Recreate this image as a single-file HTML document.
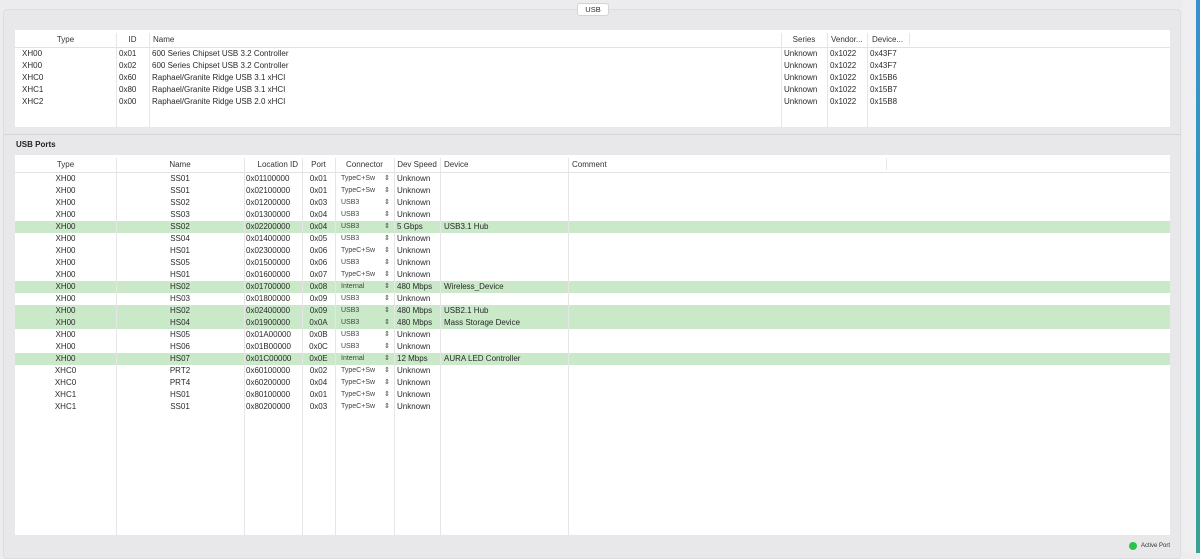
<!DOCTYPE html>
<html><head><meta charset="utf-8"><style>
*{margin:0;padding:0;box-sizing:border-box}
body{width:1200px;height:553px;overflow:hidden;background:#ececee;font-family:"Liberation Sans",sans-serif;font-size:8px;color:#2a2a2a;position:relative}
.abs{position:absolute}
#panel{left:3px;top:9px;width:1178px;height:550px;background:#e8e8ea;border:1px solid #dedee0;border-radius:4px}
#strip{left:1196px;top:0;width:4px;height:553px;background:linear-gradient(#3a8fd0,#2f9fb0 60%,#3aa090)}
.tbl{background:#fff;left:15px;width:1155px}
.vl{position:absolute;width:1px;background:#e6e6e6}
.hl{position:absolute;height:1px;background:#e2e2e2;left:0;right:0}
.row{position:absolute;left:0;width:1155px;height:12px;line-height:12px;white-space:nowrap}
.row span{position:absolute}
.g{background:#c9e9c9}
.c{text-align:center}
.h{color:#333}
.sm{font-size:7px;color:#444}
</style></head><body>
<div class="abs" id="panel"></div>
<div class="abs" style="left:1183px;top:0;width:13px;height:553px;background:#efeff1"></div>
<div class="abs" id="strip"></div>
<div class="abs" style="left:577px;top:3px;width:32px;height:13px;background:#fff;border:1px solid #d4d4d4;border-radius:3px;text-align:center;line-height:11px;font-size:7.5px">USB</div>

<!-- top table -->
<div class="abs tbl" style="top:30px;height:97px">
  <div class="hl" style="top:17px"></div>
  <div class="vl" style="left:101px;top:3px;height:94px"></div>
  <div class="vl" style="left:134px;top:3px;height:94px"></div>
  <div class="vl" style="left:766px;top:3px;height:94px"></div>
  <div class="vl" style="left:812px;top:3px;height:94px"></div>
  <div class="vl" style="left:852px;top:3px;height:94px"></div>
  <div class="vl" style="left:894px;top:3px;height:12px"></div>
  <div class="row h" style="top:4px"><span style="left:0;width:101px" class="c">Type</span><span style="left:101px;width:33px" class="c">ID</span><span style="left:138px">Name</span><span style="left:766px;width:46px" class="c">Series</span><span style="left:816px">Vendor...</span><span style="left:857px">Device...</span></div>
  <div class="row" style="top:18px"><span style="left:7px">XH00</span><span style="left:104px">0x01</span><span style="left:137px">600 Series Chipset USB 3.2 Controller</span><span style="left:769px">Unknown</span><span style="left:815px">0x1022</span><span style="left:855px">0x43F7</span></div>
  <div class="row" style="top:30px"><span style="left:7px">XH00</span><span style="left:104px">0x02</span><span style="left:137px">600 Series Chipset USB 3.2 Controller</span><span style="left:769px">Unknown</span><span style="left:815px">0x1022</span><span style="left:855px">0x43F7</span></div>
  <div class="row" style="top:42px"><span style="left:7px">XHC0</span><span style="left:104px">0x60</span><span style="left:137px">Raphael/Granite Ridge USB 3.1 xHCI</span><span style="left:769px">Unknown</span><span style="left:815px">0x1022</span><span style="left:855px">0x15B6</span></div>
  <div class="row" style="top:54px"><span style="left:7px">XHC1</span><span style="left:104px">0x80</span><span style="left:137px">Raphael/Granite Ridge USB 3.1 xHCI</span><span style="left:769px">Unknown</span><span style="left:815px">0x1022</span><span style="left:855px">0x15B7</span></div>
  <div class="row" style="top:66px"><span style="left:7px">XHC2</span><span style="left:104px">0x00</span><span style="left:137px">Raphael/Granite Ridge USB 2.0 xHCI</span><span style="left:769px">Unknown</span><span style="left:815px">0x1022</span><span style="left:855px">0x15B8</span></div>
</div>
<div class="abs" style="left:4px;top:134px;width:1177px;height:1px;background:#d6d6d8"></div>
<div class="abs" style="left:16px;top:140px;font-weight:bold;font-size:8px;color:#222">USB Ports</div>

<!-- bottom table -->
<div class="abs tbl" style="top:155px;height:380px" id="bt">
  <div class="hl" style="top:17px"></div>
  <div class="row h" style="top:4px"><span style="left:0;width:101px" class="c">Type</span><span style="left:101px;width:128px" class="c">Name</span><span style="left:229px;width:58px;text-align:right;padding-right:4px">Location ID</span><span style="left:287px;width:33px" class="c">Port</span><span style="left:320px;width:59px" class="c">Connector</span><span style="left:379px;width:46px" class="c">Dev Speed</span><span style="left:429px">Device</span><span style="left:557px">Comment</span></div>
  <div class="vl" style="left:871px;top:3px;height:12px"></div>
</div>
<script>
var d=[
["XH00","SS01","0x01100000","0x01","TypeC+Sw","Unknown","",0],
["XH00","SS01","0x02100000","0x01","TypeC+Sw","Unknown","",0],
["XH00","SS02","0x01200000","0x03","USB3","Unknown","",0],
["XH00","SS03","0x01300000","0x04","USB3","Unknown","",0],
["XH00","SS02","0x02200000","0x04","USB3","5 Gbps","USB3.1 Hub",1],
["XH00","SS04","0x01400000","0x05","USB3","Unknown","",0],
["XH00","HS01","0x02300000","0x06","TypeC+Sw","Unknown","",0],
["XH00","SS05","0x01500000","0x06","USB3","Unknown","",0],
["XH00","HS01","0x01600000","0x07","TypeC+Sw","Unknown","",0],
["XH00","HS02","0x01700000","0x08","Internal","480 Mbps","Wireless_Device",1],
["XH00","HS03","0x01800000","0x09","USB3","Unknown","",0],
["XH00","HS02","0x02400000","0x09","USB3","480 Mbps","USB2.1 Hub",1],
["XH00","HS04","0x01900000","0x0A","USB3","480 Mbps","Mass Storage Device",1],
["XH00","HS05","0x01A00000","0x0B","USB3","Unknown","",0],
["XH00","HS06","0x01B00000","0x0C","USB3","Unknown","",0],
["XH00","HS07","0x01C00000","0x0E","Internal","12 Mbps","AURA LED Controller",1],
["XHC0","PRT2","0x60100000","0x02","TypeC+Sw","Unknown","",0],
["XHC0","PRT4","0x60200000","0x04","TypeC+Sw","Unknown","",0],
["XHC1","HS01","0x80100000","0x01","TypeC+Sw","Unknown","",0],
["XHC1","SS01","0x80200000","0x03","TypeC+Sw","Unknown","",0]];
var h="";
d.forEach(function(r,i){var t=17+i*12;
h+='<div class="row'+(r[7]?' g':'')+'" style="top:'+(t+1)+'px"><span style="left:0;width:101px" class="c">'+r[0]+'</span><span style="left:101px;width:128px" class="c">'+r[1]+'</span><span style="left:231px">'+r[2]+'</span><span style="left:287px;width:33px" class="c">'+r[3]+'</span><span class="sm" style="left:326px">'+r[4]+'</span><span class="sm" style="left:369px">&#8661;</span><span style="left:382px">'+r[5]+'</span><span style="left:429px">'+r[6]+'</span></div>';});
[101,229,287,320,379,425,553].forEach(function(x){h+='<div class="vl" style="left:'+x+'px;top:3px;height:377px"></div>';});
document.getElementById('bt').insertAdjacentHTML('beforeend',h);
</script>
<div class="abs" style="left:1129px;top:542px;width:8px;height:8px;border-radius:50%;background:#2fc24a"></div>
<div class="abs" style="left:1141px;top:543px;font-size:6px;color:#333">Active Port</div>
</body></html>
